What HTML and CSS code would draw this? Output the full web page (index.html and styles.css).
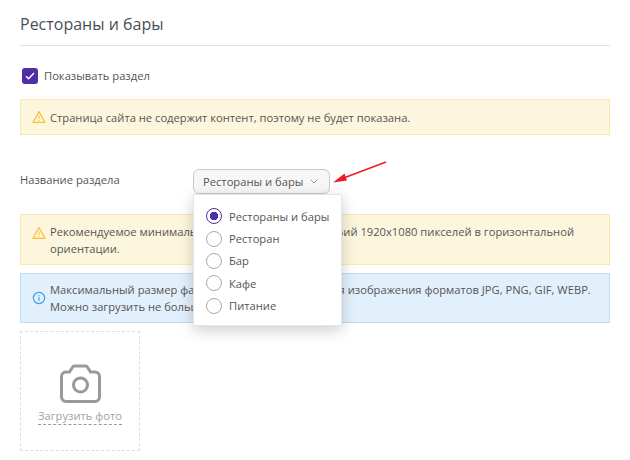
FILE: index.html
```html
<!DOCTYPE html>
<html lang="ru">
<head>
<meta charset="utf-8">
<title>Рестораны и бары</title>
<link rel="stylesheet" href="styles.css">
</head>
<body>
<main class="page">
  <h1 class="title">Рестораны и бары</h1>
  <label class="check">
    <span class="check-box">
      <svg width="10" height="8" viewBox="0 0 10 8"><path d="M1 4.200 3.600 6.800 9 1" fill="none" stroke="#fff" stroke-width="1.400"/></svg>
    </span>
    Показывать раздел
  </label>
  <div class="alert warn one">
    <svg class="alert-icon" width="14" height="14" viewBox="0 0 14 14"><path d="M7 1.600 1 12.400h12z" fill="none" stroke="#fcc035" stroke-width="1.200" stroke-linejoin="round"/><path d="M7 5.400v3.600M7 10v1.100" stroke="#fcc035" stroke-width="1.100"/></svg>
    <p>Страница сайта не содержит контент, поэтому не будет показана.</p>
  </div>
  <div class="name-row">
    <span class="name-label">Название раздела</span>
    <div class="select-wrap">
      <button class="select" type="button">Рестораны и бары
        <svg width="8" height="5" viewBox="0 0 8 5"><path d="M.8.8 4 4 7.200.8" fill="none" stroke="#999" stroke-width="1"/></svg>
      </button>
      <ul class="menu">
        <li class="opt on"><span class="radio"></span>Рестораны и бары</li>
        <li class="opt"><span class="radio"></span>Ресторан</li>
        <li class="opt"><span class="radio"></span>Бар</li>
        <li class="opt"><span class="radio"></span>Кафе</li>
        <li class="opt"><span class="radio"></span>Питание</li>
      </ul>
    </div>
    <svg class="arrow" width="56" height="24" viewBox="0 0 56 24"><path d="M54 1 9 18" stroke="#ee1c25" stroke-width="1.600"/><path d="M1 21.500 12.500 12.600 15 19.500z" fill="#ee1c25"/></svg>
  </div>
  <div class="alert warn two">
    <svg class="alert-icon" width="14" height="14" viewBox="0 0 14 14"><path d="M7 1.600 1 12.400h12z" fill="none" stroke="#fcc035" stroke-width="1.200" stroke-linejoin="round"/><path d="M7 5.400v3.600M7 10v1.100" stroke="#fcc035" stroke-width="1.100"/></svg>
    <p>Рекомендуемое минимальное разрешение фотографий 1920x1080 пикселей в горизонтальной<br>ориентации.</p>
  </div>
  <div class="alert info">
    <svg class="alert-icon" width="14" height="14" viewBox="0 0 14 14"><circle cx="7" cy="7" r="5.600" fill="none" stroke="#3e9bf2" stroke-width="1.200"/><path d="M7 6.200v3.600M7 4.200v1.100" stroke="#3e9bf2" stroke-width="1.200"/></svg>
    <p>Максимальный размер файла 10 Мб. Допускается для изображения форматов JPG, PNG, GIF, WEBP.<br>Можно загрузить не больше 20 файлов.</p>
  </div>
  <div class="upload">
    <svg width="41" height="39" viewBox="0 0 41 39"><path d="M6 8h3.500l3-4.800a2.500 2.500 0 0 1 2-1.200h11a2.500 2.500 0 0 1 2 1.200l3 4.800H35a4.500 4.500 0 0 1 4.500 4.500V33a4.500 4.500 0 0 1-4.500 4.500H6A4.500 4.500 0 0 1 1.500 33V12.500A4.500 4.500 0 0 1 6 8z" fill="none" stroke="#999" stroke-width="3"/><circle cx="20.500" cy="21" r="7" fill="none" stroke="#999" stroke-width="3"/></svg>
    <span class="upload-text">Загрузить фото</span>
  </div>
</main>
</body>
</html>
```
FILE: styles.css
```css
* { box-sizing: border-box; }
html, body { margin: 0; padding: 0; background: #fff; }
body { font-family: "Open Sans", sans-serif; font-size: 11.200px; color: #555; }
.page { padding: 0 20px; width: 630px; height: 460px; overflow: hidden; }
.title {
  margin: 0;
  height: 46px;
  padding-top: 12px;
  font-size: 16px;
  line-height: 24px;
  font-weight: 400;
  color: #4a4f57;
  border-bottom: 1px solid #e2e2e2;
}
.check { display: flex; align-items: center; gap: 6px; height: 18px; margin: 21px 0 0 2px; line-height: 18px; }
.check-box {
  width: 16px; height: 16px;
  border-radius: 3px;
  background: #4f2da3;
  display: flex; align-items: center; justify-content: center;
}
.alert { display: flex; align-items: center; gap: 4px; padding: 0 10px; border: 1px solid; line-height: 16.800px; }
.alert p { margin: 0; padding-top: 2px; }
.alert-icon { flex: none; margin-left: 1px; }
.warn { background: #fdf6de; border-color: #fce8ab; }
.info { background: #e2f0fc; border-color: #bddcf6; height: 50px; margin-top: 8px; }
.info .alert-icon { margin-top: -1px; }
.one { height: 36px; margin-top: 14px; }
.two { height: 51px; margin-top: 20px; }
.two .alert-icon { margin-top: -13px; }
.name-row { position: relative; display: flex; align-items: center; height: 25px; margin-top: 34px; }
.name-label { width: 173px; margin-top: -5px; }
.select-wrap { position: relative; }
.select {
  display: flex; align-items: center; gap: 7px;
  width: 137px; height: 25px;
  padding: 0 0 0 9px;
  background: #f7f7f7;
  border: 1px solid #c8c8c8;
  border-radius: 6px;
  font: inherit;
  color: #555;
}
.menu {
  position: absolute;
  left: 0; top: 25px;
  z-index: 2;
  width: 149px; height: 132px;
  margin: 0;
  padding: 10px 0 0 12px;
  list-style: none;
  background: #fff;
  border: 1px solid #e6e6e6;
  box-shadow: 0 4px 14px rgba(0, 0, 0, .2);
}
.opt { display: flex; align-items: center; gap: 7px; height: 22.400px; }
.radio { width: 16px; height: 16px; border: 1px solid #aaa; border-radius: 50%; background: #fff; flex: none; }
.on .radio { border-color: #4f2da3; background: radial-gradient(circle, #4f2da3 0 4px, #fff 4.500px); }
.arrow { position: absolute; left: 312px; top: -8px; }
.upload {
  width: 120px; height: 120px;
  margin-top: 8px;
  border: 1px dashed #ddd;
  display: flex; flex-direction: column; align-items: center;
  padding-top: 32px;
}
.upload-text { margin-top: 5px; line-height: 16px; font-size: 11.200px; color: #a3a3a3; border-bottom: 1px dashed #999; }
```
